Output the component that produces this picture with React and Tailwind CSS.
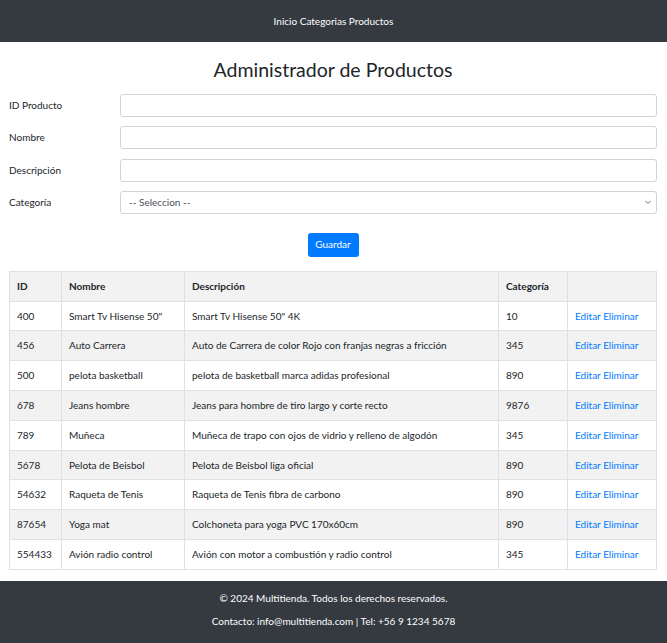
import React from 'react';

const productos = [
  { id: '400', nombre: 'Smart Tv Hisense 50"', desc: 'Smart Tv Hisense 50" 4K', cat: '10' },
  { id: '456', nombre: 'Auto Carrera', desc: 'Auto de Carrera de color Rojo con franjas negras a fricción', cat: '345' },
  { id: '500', nombre: 'pelota basketball', desc: 'pelota de basketball marca adidas profesional', cat: '890' },
  { id: '678', nombre: 'Jeans hombre', desc: 'Jeans para hombre de tiro largo y corte recto', cat: '9876' },
  { id: '789', nombre: 'Muñeca', desc: 'Muñeca de trapo con ojos de vidrio y relleno de algodón', cat: '345' },
  { id: '5678', nombre: 'Pelota de Beisbol', desc: 'Pelota de Beisbol liga oficial', cat: '890' },
  { id: '54632', nombre: 'Raqueta de Tenis', desc: 'Raqueta de Tenis fibra de carbono', cat: '890' },
  { id: '87654', nombre: 'Yoga mat', desc: 'Colchoneta para yoga PVC 170x60cm', cat: '890' },
  { id: '554433', nombre: 'Avión radio control', desc: 'Avión con motor a combustión y radio control', cat: '345' },
];

const Campo = ({ label, children }) => (
  <div className="flex items-center">
    <label className="w-[111px] text-[10px] text-[#212529]">{label}</label>
    <div className="flex-1">{children}</div>
  </div>
);

const inputCls = 'block w-full h-[23px] rounded-[3px] border border-[#ced4da] bg-white px-2 text-[10px] text-[#495057] outline-none';

export default function App() {
  return (
    <div className="min-h-screen bg-white text-[#212529] font-['Segoe_UI','Lato',sans-serif]">
      {/* Navbar */}
      <nav className="h-[42px] bg-[#343a40] flex items-center justify-center">
        <span className="text-[10px] text-white">Inicio Categorias Productos</span>
      </nav>

      <main className="pl-[9px] pr-[10px]">
        <h1 className="text-center text-[19.5px] leading-[24px] pt-[16px] mb-[12px]">Administrador de Productos</h1>

        <form className="flex flex-col gap-y-[9.3px]" onSubmit={e => e.preventDefault()}>
          <Campo label="ID Producto"><input className={inputCls} /></Campo>
          <Campo label="Nombre"><input className={inputCls} /></Campo>
          <Campo label="Descripción"><input className={inputCls} /></Campo>
          <Campo label="Categoría">
            <div className="relative">
              <select className={`${inputCls} appearance-none`}>
                <option>-- Seleccion --</option>
              </select>
              <svg className="absolute right-[6px] top-[9px] w-[6px] h-[5px] pointer-events-none" viewBox="0 0 6 5" fill="none" stroke="#6c757d" strokeWidth="1">
                <path d="M0.5 1l2.5 2.5L5.5 1" />
              </svg>
            </div>
          </Campo>
          <div className="flex justify-center mt-[9.5px]">
            <button type="submit" className="h-[24px] w-[51px] rounded-[3px] bg-[#007bff] text-white text-[10px]">Guardar</button>
          </div>
        </form>

        <table className="mt-[14px] w-full table-fixed border-collapse text-[10px]">
          <colgroup>
            <col className="w-[52px]" />
            <col className="w-[123px]" />
            <col className="w-[314px]" />
            <col className="w-[69px]" />
            <col />
          </colgroup>
          <thead>
            <tr className="h-[30px] bg-[#f2f2f2]">
              <th className="border border-[#dee2e6] px-[7px] text-left font-bold">ID</th>
              <th className="border border-[#dee2e6] px-[7px] text-left font-bold">Nombre</th>
              <th className="border border-[#dee2e6] px-[7px] text-left font-bold">Descripción</th>
              <th className="border border-[#dee2e6] px-[7px] text-left font-bold">Categoría</th>
              <th className="border border-[#dee2e6] px-[7px]"></th>
            </tr>
          </thead>
          <tbody>
            {productos.map((p, i) => (
              <tr key={p.id} className={`h-[29.8px] ${i % 2 === 1 ? 'bg-[#f2f2f2]' : 'bg-white'}`}>
                <td className="border border-[#dee2e6] px-[7px]">{p.id}</td>
                <td className="border border-[#dee2e6] px-[7px]">{p.nombre}</td>
                <td className="border border-[#dee2e6] px-[7px]">{p.desc}</td>
                <td className="border border-[#dee2e6] px-[7px]">{p.cat}</td>
                <td className="border border-[#dee2e6] px-[7px] text-[#007bff]">
                  <a href="#">Editar</a> <a href="#">Eliminar</a>
                </td>
              </tr>
            ))}
          </tbody>
        </table>
      </main>

      {/* Footer */}
      <footer className="mt-[11px] bg-[#343a40] text-white text-[10px] text-center pt-[9px] pb-[9px]">
        <p className="leading-[16px] mb-[7px]">© 2024 Multitienda. Todos los derechos reservados.</p>
        <p className="leading-[16px] mb-[7px]">Contacto: info@multitienda.com | Tel: +56 9 1234 5678</p>
      </footer>
    </div>
  );
}
